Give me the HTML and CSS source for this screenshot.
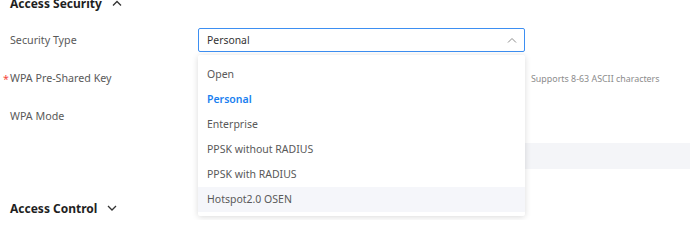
FILE: index.html
```html
<!DOCTYPE html>
<html lang="en">
<head>
  <meta charset="UTF-8">
  <title>Access Security</title>
  <link rel="stylesheet" href="styles.css">
</head>
<body>

<div class="page">
  <h2 class="section-title">Access Security
    <svg class="chev" width="10" height="6" viewBox="0 0 10 6"><path d="M1 5.5 L5 1.5 L9 5.5" fill="none" stroke="#333" stroke-width="1.3"/></svg>
  </h2>

  <div class="form-row">
    <label class="form-label">Security Type</label>
    <div class="form-control">
      <div class="select open">
        <span>Personal</span>
        <svg class="select-arrow" width="10" height="6" viewBox="0 0 10 6"><path d="M1 5.5 L5 1.5 L9 5.5" fill="none" stroke="#8c8c8c" stroke-width="1"/></svg>
      </div>
      <ul class="dropdown">
        <li>Open</li>
        <li class="selected">Personal</li>
        <li>Enterprise</li>
        <li>PPSK without RADIUS</li>
        <li>PPSK with RADIUS</li>
        <li class="hover">Hotspot2.0 OSEN</li>
      </ul>
    </div>
  </div>

  <div class="form-row">
    <label class="form-label required">WPA Pre-Shared Key</label>
    <div class="form-control">
      <div class="input"></div>
      <span class="hint">Supports 8-63 ASCII characters</span>
    </div>
  </div>

  <div class="form-row">
    <label class="form-label">WPA Mode</label>
    <div class="form-control"></div>
  </div>

  <div class="info-row">
    <div class="info-bar"></div>
  </div>

  <h2 class="section-title">Access Control
    <svg class="chev" width="10" height="6" viewBox="0 0 10 6"><path d="M1 1 L5 5 L9 1" fill="none" stroke="#333" stroke-width="1.3"/></svg>
  </h2>
</div>

</body>
</html>
```

FILE: styles.css
```css
* {
  margin: 0;
  padding: 0;
  box-sizing: border-box;
}

body {
  font-family: 'Noto Sans', 'Open Sans', Arial, sans-serif;
  background: #ffffff;
  color: #333333;
  overflow: hidden;
}

.page {
  margin-top: -9px;
  padding-left: 10px;
}

.section-title {
  display: flex;
  align-items: center;
  gap: 10px;
  font-size: 12px;
  font-weight: 700;
  color: #1f1f1f;
  height: 24px;
}

.form-row {
  display: flex;
  align-items: center;
  height: 38px;
}

.form-row:first-of-type {
  margin-top: 6px;
}

.form-label {
  width: 188px;
  font-size: 10.7px;
  color: #595959;
  position: relative;
}

.required::before {
  content: '*';
  position: absolute;
  left: -7px;
  top: 1px;
  color: #f5483b;
}

.form-control {
  position: relative;
  display: flex;
  align-items: center;
  gap: 6px;
}

.select,
.input {
  width: 327px;
  height: 24px;
  border: 1px solid #d9d9d9;
  border-radius: 2px;
  display: flex;
  align-items: center;
  justify-content: space-between;
  padding: 0 7px 0 8px;
  font-size: 10.4px;
  color: #333333;
}

.select.open {
  border-color: #3d8ff2;
}

.dropdown {
  position: absolute;
  top: 27px;
  left: 0;
  width: 327px;
  list-style: none;
  background: #ffffff;
  border-radius: 2px;
  padding: 7px 0 4px;
  box-shadow: 0 1px 6px rgba(0,0,0,0.15);
  z-index: 10;
}

.dropdown li {
  height: 25px;
  line-height: 25px;
  padding-left: 9px;
  font-size: 10.5px;
  color: #595959;
}

.dropdown li.selected {
  color: #1a7ff0;
  font-weight: 600;
}

.dropdown li.hover {
  background: #f5f6fa;
}

.hint {
  font-size: 8.9px;
  color: #8c8c8c;
  white-space: nowrap;
}

.info-row {
  padding-left: 188px;
  margin: 8px 0 27px;
}

.info-bar {
  height: 26px;
  background: #f4f5f8;
}
```
